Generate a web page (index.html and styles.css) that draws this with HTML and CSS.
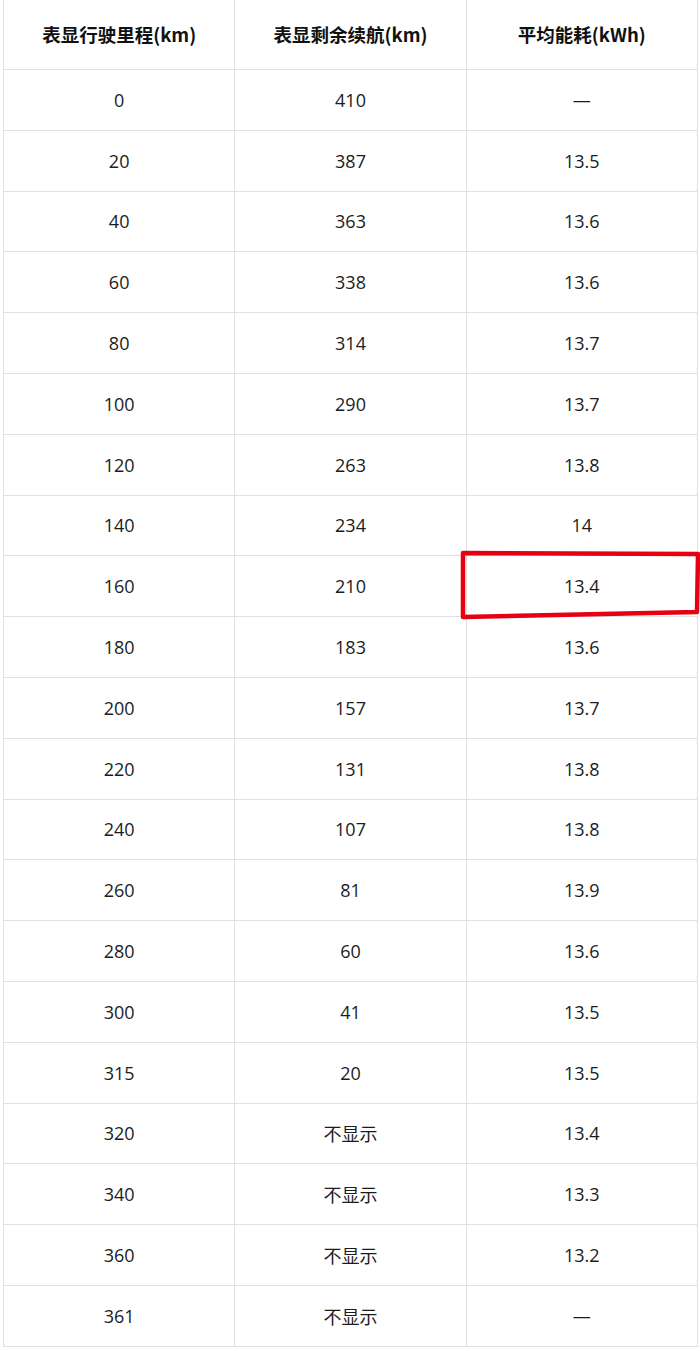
FILE: index.html
```html
<!DOCTYPE html>
<html lang="zh-CN">
<head>
<meta charset="utf-8">
<link rel="stylesheet" href="styles.css">
</head>
<body>
<div class="wrap">
<table class="data">
<thead>
<tr><th>表显行驶里程(km)</th><th>表显剩余续航(km)</th><th>平均能耗(kWh)</th></tr>
</thead>
<tbody>
<tr><td>0</td><td>410</td><td>—</td></tr>
<tr><td>20</td><td>387</td><td>13.5</td></tr>
<tr><td>40</td><td>363</td><td>13.6</td></tr>
<tr><td>60</td><td>338</td><td>13.6</td></tr>
<tr><td>80</td><td>314</td><td>13.7</td></tr>
<tr><td>100</td><td>290</td><td>13.7</td></tr>
<tr><td>120</td><td>263</td><td>13.8</td></tr>
<tr><td>140</td><td>234</td><td>14</td></tr>
<tr><td>160</td><td>210</td><td>13.4</td></tr>
<tr><td>180</td><td>183</td><td>13.6</td></tr>
<tr><td>200</td><td>157</td><td>13.7</td></tr>
<tr><td>220</td><td>131</td><td>13.8</td></tr>
<tr><td>240</td><td>107</td><td>13.8</td></tr>
<tr><td>260</td><td>81</td><td>13.9</td></tr>
<tr><td>280</td><td>60</td><td>13.6</td></tr>
<tr><td>300</td><td>41</td><td>13.5</td></tr>
<tr><td>315</td><td>20</td><td>13.5</td></tr>
<tr><td>320</td><td>不显示</td><td>13.4</td></tr>
<tr><td>340</td><td>不显示</td><td>13.3</td></tr>
<tr><td>360</td><td>不显示</td><td>13.2</td></tr>
<tr><td>361</td><td>不显示</td><td>—</td></tr>
</tbody>
</table>
<svg class="mark" width="244" height="74" viewBox="0 0 244 74">
<polygon points="3,3 238,4 237,62 3,67" fill="none" stroke="#e60012" stroke-width="4.5" stroke-linejoin="round"/>
</svg>
</div>
</body>
</html>
```
FILE: styles.css
```css
html, body {
  margin: 0;
  padding: 0;
  background: #ffffff;
}
.wrap {
  position: relative;
  width: 700px;
}
.data {
  border-collapse: collapse;
  margin-left: 3px;
  margin-top: -1px;
  table-layout: fixed;
  width: 695px;
  color: #1c1c1c;
}
.data th, .data td {
  border: 1px solid #dde1e6;
  text-align: center;
  vertical-align: middle;
  padding: 0;
}
.data th {
  height: 68px;
  font-family: "Noto Sans CJK SC", sans-serif;
  font-weight: 700;
  font-size: 18.5px;
  color: #111;
  padding-bottom: 1px;
}
.data td {
  height: 59.8px;
  font-size: 18px;
  font-family: "Open Sans", "Noto Sans CJK SC", sans-serif;
}
.mark {
  position: absolute;
  left: 460px;
  top: 551px;
}
```
